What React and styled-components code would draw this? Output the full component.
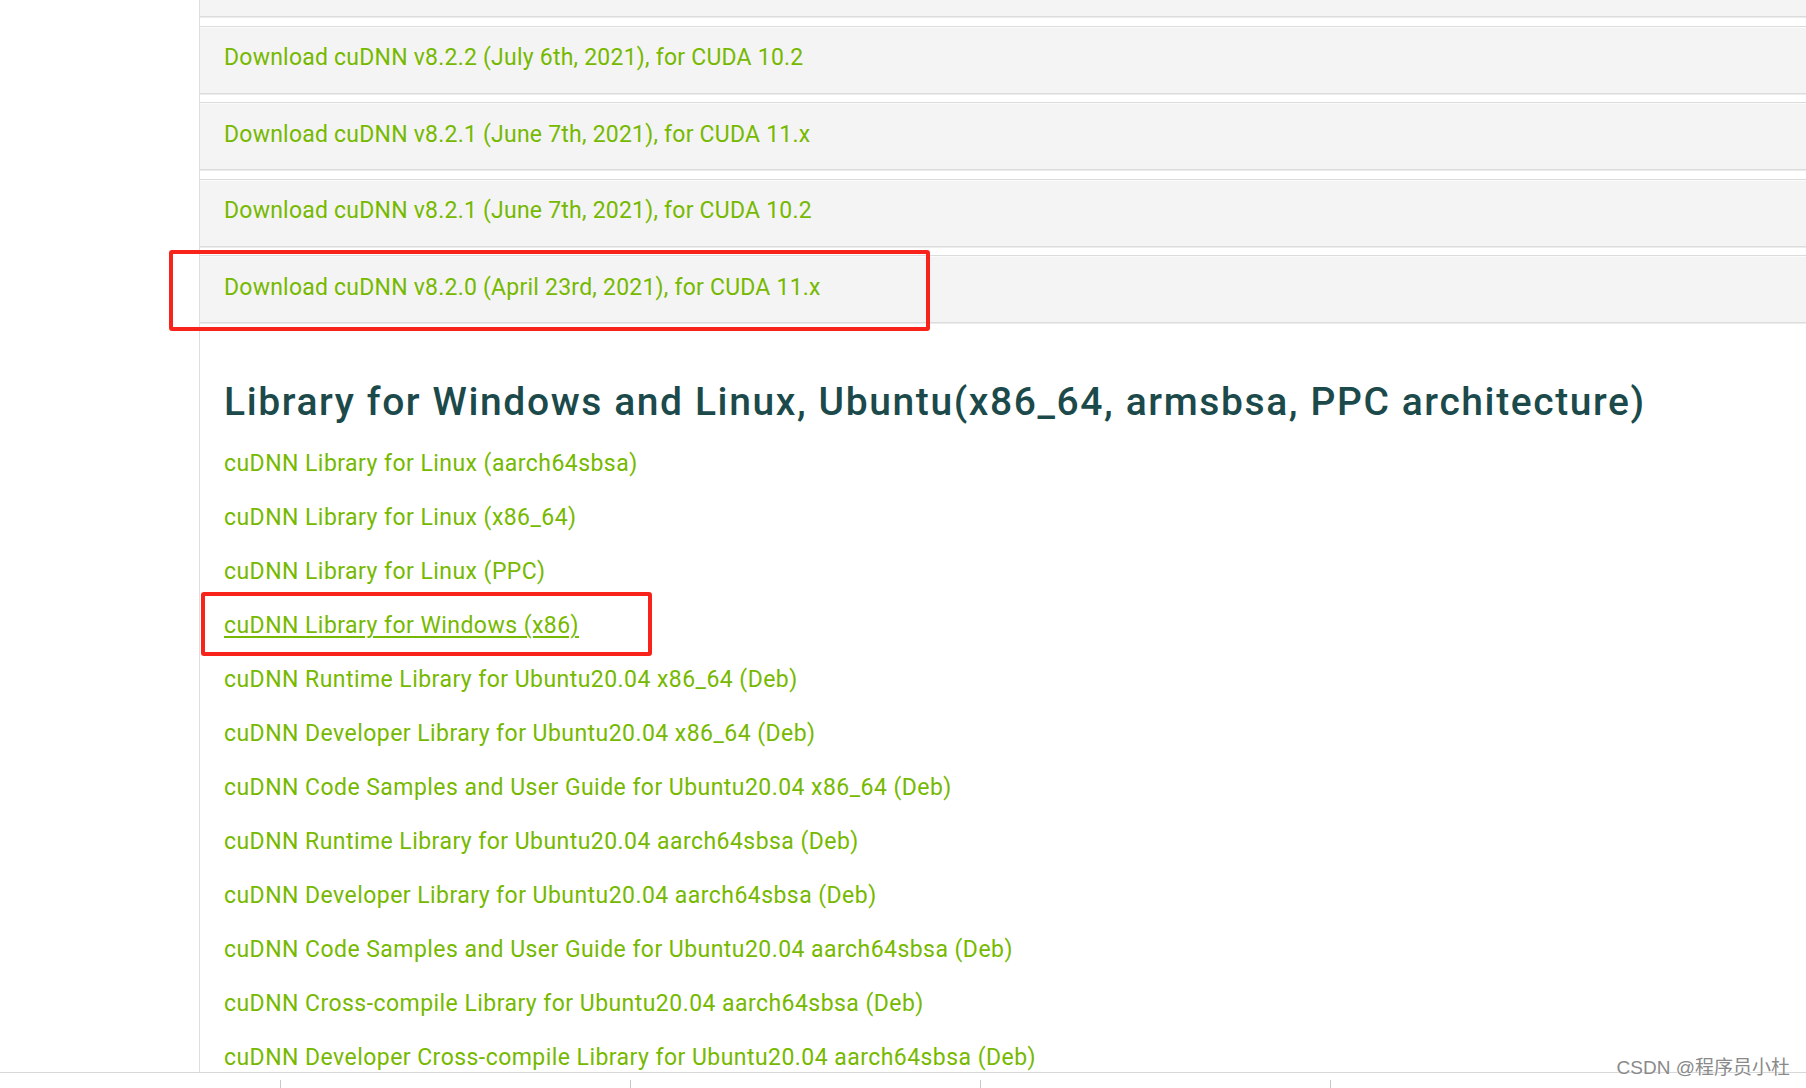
import React from "react";
import styled, { createGlobalStyle } from "styled-components";

const Global = createGlobalStyle`
  html, body { margin: 0; padding: 0; background: #ffffff; }
  body { font-family: Roboto, "Noto Sans", Arial, sans-serif; overflow: hidden; }
  #root { min-height: 1088px; }
`;

const Page = styled.div`
  position: relative;
  width: 1806px;
  height: 1088px;
  overflow: hidden;
  display: flex;
  flex-direction: column;
`;

const Top = styled.div`
  display: grid;
  grid-template-columns: 199px 1fr;
`;

const Sidebar = styled.div``;

const Content = styled.main`
  border-left: 1px solid #dedede;
  display: flex;
  flex-direction: column;
  height: 1072px;
`;

const Releases = styled.div`
  display: flex;
  flex-direction: column;
  gap: 8.5px;
  margin-top: -50.7px;
`;

const Release = styled.div`
  position: relative;
  box-sizing: border-box;
  height: 68px;
  background: #f4f4f4;
  border-top: 1px solid #dcdcdc;
  border-bottom: 1px solid #dcdcdc;
  box-shadow: inset 0 1px 0 #fbfbfb, 0 1px 0 #ececec;
  display: flex;
  align-items: center;
  padding-left: 24px;
`;

const ReleaseLink = styled.a`
  font-size: 23px;
  letter-spacing: 0.22px;
  color: #76b900;
  text-decoration: none;
  line-height: 30px;
  margin-top: -3px;
  cursor: pointer;
`;

const Heading = styled.h2`
  margin: 56px 0 0 24px;
  font-size: 39px;
  line-height: 46px;
  font-weight: 500;
  color: #1c4a4b;
  letter-spacing: 1.6px;
  white-space: nowrap;
`;

const Links = styled.ul`
  list-style: none;
  margin: 24px 0 0 0;
  padding: 0 0 0 24px;
  display: flex;
  flex-direction: column;
  gap: 24px;
`;

const Item = styled.li`
  position: relative;
  line-height: 30px;
  height: 30px;
`;

const LibLink = styled.a`
  font-size: 23px;
  letter-spacing: 0.45px;
  color: #76b900;
  white-space: nowrap;
  cursor: pointer;
  text-decoration: ${(p) => (p.$active ? "underline" : "none")};
  text-decoration-thickness: 2px;
  text-underline-offset: 3px;
`;

const Mark = styled.span`
  position: absolute;
  box-sizing: border-box;
  border: 4px solid #f8231a;
  border-radius: 3px;
  pointer-events: none;
  left: ${(p) => p.$left}px;
  top: ${(p) => p.$top}px;
  width: ${(p) => p.$width}px;
  height: ${(p) => p.$height}px;
`;

const Footer = styled.footer`
  border-top: 1px solid #d8d8d8;
  padding: 7px 0 0 280px;
  display: flex;
  flex: 1;
`;

const FooterCol = styled.div`
  width: 349px;
  border-left: 1px solid #c8c8c8;
  height: 40px;
`;

const Watermark = styled.div`
  position: absolute;
  right: 16px;
  bottom: 9px;
  font-family: "Liberation Sans", "Noto Sans CJK SC", sans-serif;
  font-size: 19px;
  color: #8a8a8a;
  text-shadow: 0 0 1px #fff, 0 0 1px #fff;
`;

const releases = [
  "",
  "Download cuDNN v8.2.2 (July 6th, 2021), for CUDA 10.2",
  "Download cuDNN v8.2.1 (June 7th, 2021), for CUDA 11.x",
  "Download cuDNN v8.2.1 (June 7th, 2021), for CUDA 10.2",
  "Download cuDNN v8.2.0 (April 23rd, 2021), for CUDA 11.x",
];

const libs = [
  "cuDNN Library for Linux (aarch64sbsa)",
  "cuDNN Library for Linux (x86_64)",
  "cuDNN Library for Linux (PPC)",
  "cuDNN Library for Windows (x86)",
  "cuDNN Runtime Library for Ubuntu20.04 x86_64 (Deb)",
  "cuDNN Developer Library for Ubuntu20.04 x86_64 (Deb)",
  "cuDNN Code Samples and User Guide for Ubuntu20.04 x86_64 (Deb)",
  "cuDNN Runtime Library for Ubuntu20.04 aarch64sbsa (Deb)",
  "cuDNN Developer Library for Ubuntu20.04 aarch64sbsa (Deb)",
  "cuDNN Code Samples and User Guide for Ubuntu20.04 aarch64sbsa (Deb)",
  "cuDNN Cross-compile Library for Ubuntu20.04 aarch64sbsa (Deb)",
  "cuDNN Developer Cross-compile Library for Ubuntu20.04 aarch64sbsa (Deb)",
];

export default function App() {
  return (
    <>
      <Global />
      <Page>
        <Top>
          <Sidebar />
          <Content>
            <Releases>
              {releases.map((r, i) => (
                <Release key={i}>
                  {r && <ReleaseLink>{r}</ReleaseLink>}
                  {i === releases.length - 1 && (
                    <Mark $left={-31} $top={-6} $width={761} $height={81} />
                  )}
                </Release>
              ))}
            </Releases>
            <Heading>
              Library for Windows and Linux, Ubuntu(x86_64, armsbsa, PPC architecture)
            </Heading>
            <Links>
              {libs.map((l, i) => (
                <Item key={i}>
                  <LibLink $active={i === 3}>{l}</LibLink>
                  {i === 3 && (
                    <Mark $left={-23} $top={-19} $width={451} $height={64} />
                  )}
                </Item>
              ))}
            </Links>
          </Content>
        </Top>
        <Footer>
          <FooterCol />
          <FooterCol />
          <FooterCol />
          <FooterCol />
        </Footer>
        <Watermark>CSDN @程序员小杜</Watermark>
      </Page>
    </>
  );
}
